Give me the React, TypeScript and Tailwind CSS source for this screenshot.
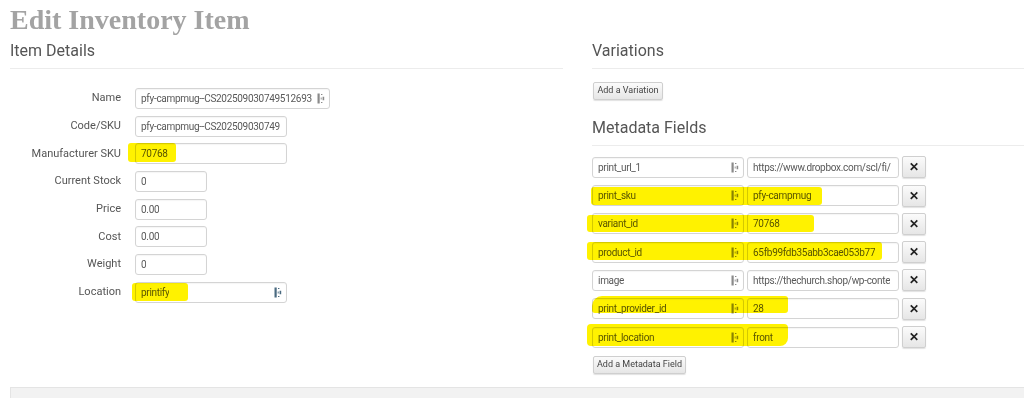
const font = { fontFamily: "Roboto, 'Liberation Sans', sans-serif" };

const FillIcon = ({ tint = "#8a8a8a" }: { tint?: string }) => (
  <svg width="8" height="11" viewBox="0 0 8 11" className="shrink-0">
    <rect x="0.5" y="0.5" width="2.2" height="10" fill={tint} />
    <path d="M4 1.5h1.4M4 9.5h1.4" stroke={tint} strokeWidth="1.1" fill="none" />
    <path d="M5.6 3.8h1.6v3.4H5.6z" fill={tint} />
    <path d="M4.2 4.5v2" stroke={tint} strokeWidth="0.9" />
  </svg>
);

const Field = ({ value, w, icon, tint }: { value: string; w: string; icon?: boolean; tint?: string }) => (
  <div
    className={`flex h-[21px] ${w} shrink-0 items-center justify-between gap-[2px] overflow-hidden rounded-[3px] border border-[#d4d4d4] bg-white pl-[5px] pr-[4px] text-[10px] tracking-[-0.3px] text-[#595959] shadow-[inset_0_1px_1px_rgba(0,0,0,0.04)]`}
  >
    <span className="overflow-hidden whitespace-nowrap">{value}</span>
    {icon && <FillIcon tint={tint} />}
  </div>
);

const Highlight = ({ cls }: { cls: string }) => (
  <div className={`pointer-events-none absolute bg-[#fff200] mix-blend-multiply ${cls}`} />
);

const GrayButton = ({ label, cls }: { label: string; cls: string }) => (
  <button
    className={`rounded-[2px] border border-[#cfcfcf] bg-[linear-gradient(#fbfbfb,#e6e6e6)] text-[9px] text-[#444] shadow-[0_1px_1px_rgba(0,0,0,0.12)] ${cls}`}
  >
    {label}
  </button>
);

const details = [
  { label: "Name", value: "pfy-campmug--CS202509030749512693", w: "w-[195px]", icon: true },
  { label: "Code/SKU", value: "pfy-campmug--CS202509030749", w: "w-[152px]" },
  { label: "Manufacturer SKU", value: "70768", w: "w-[152px]" },
  { label: "Current Stock", value: "0", w: "w-[72px]" },
  { label: "Price", value: "0.00", w: "w-[72px]" },
  { label: "Cost", value: "0.00", w: "w-[72px]" },
  { label: "Weight", value: "0", w: "w-[72px]" },
  { label: "Location", value: "printify", w: "w-[152px]", icon: true, tint: "#4a6a80" },
];

const meta = [
  ["print_url_1", "https://www.dropbox.com/scl/fi/"],
  ["print_sku", "pfy-campmug"],
  ["variant_id", "70768"],
  ["product_id", "65fb99fdb35abb3cae053b77"],
  ["image", "https://thechurch.shop/wp-conte"],
  ["print_provider_id", "28"],
  ["print_location", "front"],
];

export default function App() {
  return (
    <div className="relative h-[398px] w-[1024px] overflow-hidden bg-white" style={font}>
      <h1
        className="pl-[10px] pt-[2px] text-[28px] font-bold leading-[36px] text-[#a3a3a3]"
        style={{ fontFamily: "'Liberation Serif', serif" }}
      >
        Edit Inventory Item
      </h1>

      <div className="grid grid-cols-[553px_1fr] gap-[29px] pl-[10px]">
        <section>
          <h2 className="border-b border-[#ececec] pb-[7px] pt-[3px] text-[16px] leading-[20px] text-[#555]">
            Item Details
          </h2>
          <div className="flex flex-col gap-[6.7px] pt-[19px]">
            {details.map((d) => (
              <div key={d.label} className="flex items-center">
                <label className="w-[125px] shrink-0 pr-[14px] text-right text-[11px] text-[#555] whitespace-nowrap">
                  {d.label}
                </label>
                <Field value={d.value} w={d.w} icon={d.icon} tint={d.tint} />
              </div>
            ))}
          </div>
        </section>

        <section>
          <h2 className="border-b border-[#ececec] pb-[7px] pt-[3px] text-[16px] leading-[20px] text-[#555]">
            Variations
          </h2>
          <GrayButton label="Add a Variation" cls="ml-px mt-[13px] h-[18px] w-[70px]" />
          <h2 className="mt-[18px] border-b border-[#ececec] pb-[7px] text-[16px] leading-[20px] text-[#555]">
            Metadata Fields
          </h2>
          <div className="flex flex-col gap-[6.3px] pt-[10px]">
            {meta.map(([k, v]) => (
              <div key={k} className="flex items-center gap-[3px]">
                <Field value={k} w="w-[152px]" icon />
                <Field value={v} w="w-[152px]" />
                <button className="flex h-[22px] w-[24px] shrink-0 items-center justify-center rounded-[2px] border border-[#cfcfcf] bg-[linear-gradient(#fbfbfb,#e6e6e6)] text-[12px] font-black leading-none text-[#222] shadow-[0_1px_1px_rgba(0,0,0,0.12)]">
                  ✕
                </button>
              </div>
            ))}
          </div>
          <GrayButton label="Add a Metadata Field" cls="ml-px mt-[8px] h-[18px] w-[93px]" />
        </section>
      </div>

      <div className="absolute bottom-0 left-[10px] right-0 h-[11px] border-l border-t border-[#e4e4e4] bg-[#f2f2f2]" />

      <Highlight cls="left-[128px] top-[143px] h-[19px] w-[48px] rounded-[3px]" />
      <Highlight cls="left-[132px] top-[283px] h-[18px] w-[56px] rounded-[3px]" />
      <Highlight cls="left-[591px] top-[187px] h-[18px] w-[231px] rounded-[3px]" />
      <Highlight cls="left-[587px] top-[215px] h-[17px] w-[227px] rounded-[3px]" />
      <Highlight cls="left-[587px] top-[242px] h-[18px] w-[295px] rounded-[3px]" />
      <Highlight cls="left-[592px] top-[296px] h-[17px] w-[196px] rounded-tl-[10px] rounded-[3px]" />
      <Highlight cls="left-[587px] top-[324px] h-[22px] w-[201px] rounded-[4px] rounded-br-[8px]" />
    </div>
  );
}
